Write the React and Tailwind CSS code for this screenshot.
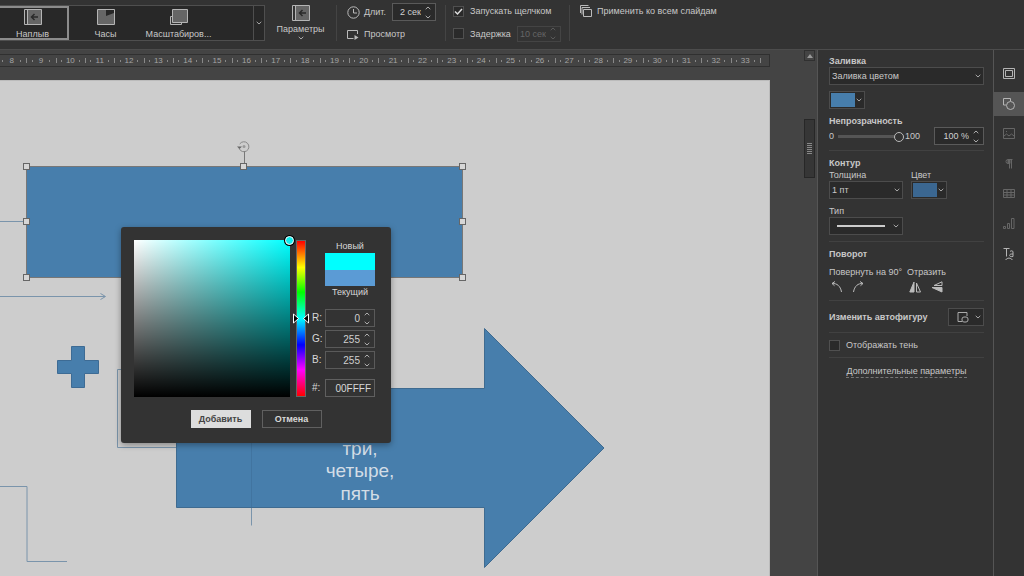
import React, { useState } from 'react';

const RULER_MARKS = Array.from({ length: 26 }, (_, i) => i + 8);

const Chevron = ({ className = '', up = false }) => (
  <svg className={`h-1 w-[6px] shrink-0 opacity-80 ${className}`} viewBox="0 0 6 4" fill="none" stroke="currentColor" aria-hidden="true">
    <path d={up ? 'M0.7 3.2 3 1l2.3 2.2' : 'M0.7 0.8 3 3l2.3-2.2'} />
  </svg>
);

const SlideInIcon = () => (
  <svg className="h-4 w-[18px] shrink-0" viewBox="0 0 18 16" fill="#666" stroke="#b5b5b5" aria-hidden="true">
    <path d="M.5.5h17v15H.5z" />
    <path d="M1 1h2v14H1z" fill="#333" stroke="none" />
    <path d="M3.500.5v15" />
    <path d="M14 8H7.500M10.500 5l-3 3 3 3" fill="none" stroke="#2a2a2a" strokeWidth="1.500" />
  </svg>
);

const ClockWipeIcon = () => (
  <svg className="h-4 w-[18px] shrink-0" viewBox="0 0 18 16" aria-hidden="true">
    <path d="M.5.5h17v15H.5z" fill="#666" stroke="#b5b5b5" />
    <path d="M9 1h8v3L9 7z" fill="#262626" />
  </svg>
);

const ZoomIcon = () => (
  <svg className="h-4 w-[18px] shrink-0" viewBox="0 0 18 16" fill="#666" stroke="#b5b5b5" aria-hidden="true">
    <path d="M.5 7.500h11v8H.5z" fill="#333" />
    <path d="M2.500.5h15v13h-15z" />
  </svg>
);

const Spinner = ({ id, value, label, className = '', disabled = false }) => (
  <div className={`flex items-center border pr-1 ${disabled ? 'border-[#444] text-[#666]' : 'border-[#5a5a5a] text-[#d0d0d0]'} ${className}`}>
    <input
      id={id}
      aria-label={label}
      defaultValue={value}
      disabled={disabled}
      className="h-full w-full min-w-0 bg-transparent pr-1 text-right outline-none"
    />
    <div className="flex flex-col gap-[5px]">
      <button type="button" aria-label="Больше" disabled={disabled} className="block"><Chevron up className="block" /></button>
      <button type="button" aria-label="Меньше" disabled={disabled} className="block"><Chevron className="block" /></button>
    </div>
  </div>
);

const CheckBox = ({ id, label, checked = false }) => (
  <div className="flex items-center gap-[6px]">
    <span className="relative block size-[11px]">
      <input
        id={id}
        type="checkbox"
        defaultChecked={checked}
        className="peer block size-[11px] appearance-none border border-[#505050] bg-[#2a2a2a]"
      />
      <svg className="pointer-events-none absolute inset-0 hidden size-[11px] peer-checked:block" viewBox="0 0 11 11" fill="none" stroke="#ddd" strokeWidth="1.500">
        <path d="m2 5.500 2.500 2.500L9 3" />
      </svg>
    </span>
    <label htmlFor={id}>{label}</label>
  </div>
);

const GalleryItem = ({ icon, label, active = false }) => (
  <button
    type="button"
    aria-pressed={active}
    className={`flex w-[73px] flex-col items-center gap-1 leading-[10px] ${active ? 'border-2 border-[#8c8c8c] pt-px' : 'pt-[3px]'}`}
  >
    {icon}
    <span>{label}</span>
  </button>
);

const Toolbar = () => (
  <header className="flex h-[50px] shrink-0 items-start border-b border-[#4c4c4c] bg-[#333] pt-[5px]">
    <div className="-ml-[5px] flex h-9 w-[270px] border border-[#4f4f4f] bg-[#282828]">
      <GalleryItem icon={<SlideInIcon />} label="Наплыв" active />
      <GalleryItem icon={<ClockWipeIcon />} label="Часы" />
      <GalleryItem icon={<ZoomIcon />} label="Масштабиров..." />
      <button type="button" aria-label="Все эффекты" className="ml-auto flex w-[11px] items-center justify-center border-l border-[#4f4f4f]">
        <Chevron />
      </button>
    </div>

    <button type="button" className="flex w-[71px] flex-col items-center">
      <SlideInIcon />
      <span className="mt-[2px]">Параметры</span>
      <Chevron className="mt-px" />
    </button>

    <div className="flex h-9 w-[109px] flex-col justify-between border-l border-[#444] pl-[10px]">
      <div className="-mt-[2px] flex items-center">
        <svg className="mr-1 size-[13px]" viewBox="0 0 13 13" fill="none" stroke="#bbb" aria-hidden="true">
          <circle cx="6.500" cy="6.500" r="5.700" />
          <path d="M6.500 3v4H10" />
        </svg>
        <label htmlFor="duration">Длит.</label>
        <Spinner id="duration" value="2 сек" className="ml-[6px] h-[18px] w-11 bg-[#2a2a2a]" />
      </div>
      <button type="button" className="flex items-center gap-[5px] pb-px">
        <svg className="h-[11px] w-3" viewBox="0 0 12 11" fill="none" stroke="#bbb" aria-hidden="true">
          <path d="M10.500 5V1.500H.5v8h6" />
          <path d="m7.500 6 4 2.500-4 2.500z" fill="#bbb" stroke="none" />
        </svg>
        Просмотр
      </button>
    </div>

    <div className="flex h-9 w-[124px] flex-col justify-between border-l border-[#444] pl-[7px]">
      <CheckBox id="on-click" label="Запускать щелчком" checked />
      <div className="flex h-[15px] items-center">
        <CheckBox id="delay" label="Задержка" />
        <Spinner label="Задержка, сек" value="10 сек" disabled className="ml-[6px] h-4 w-11" />
      </div>
    </div>

    <div className="h-9 border-l border-[#444] pl-[10px]">
      <button type="button" className="flex items-center gap-[5px]">
        <svg className="h-3 w-3" viewBox="0 0 12 12" fill="#333" stroke="#bbb" aria-hidden="true">
          <path d="M.5 8V.5h8" fill="none" />
          <path d="M2 9.500V2.500h8" fill="none" />
          <path d="M3.500 4.500h8v7h-8z" />
        </svg>
        Применить ко всем слайдам
      </button>
    </div>
  </header>
);

const Ruler = () => (
  <div className="h-[13px] overflow-hidden border border-l-0 border-[#303030] bg-[#444] pr-2">
    <div className="-ml-[3px] flex h-full text-[8px] leading-[11px] text-[#a5a5a5]">
      {RULER_MARKS.map((mark) => (
        <div key={mark} className="flex min-w-0 flex-1 items-center justify-between">
          <i className="h-[5px] w-px bg-[#888]" />
          <i className="h-[2px] w-px bg-[#888]" />
          <span className="flex w-2 justify-center">{mark}</span>
          <i className="h-[2px] w-px bg-[#888]" />
          <i className="w-px" />
        </div>
      ))}
      <i className="my-auto h-[5px] w-px bg-[#888]" />
    </div>
  </div>
);

const HANDLES = [[27, 86], [244, 86], [463, 86], [27, 141], [463, 141], [27, 197], [463, 197]];

const Slide = () => (
  <div className="mt-[13px] flex-1 overflow-hidden border-t border-r border-[#bbb] bg-[#cdcdcd]">
    <svg className="block h-[495px] w-[770px]" viewBox="0 0 770 495" fill="none">
      <g stroke="#7a94ab">
        <path d="M0 140.500h27M0 215.500h105M100.500 212.500l5 3-5 3" />
        <path d="M0 405.500h27v75h40" />
        <path d="M200 288.500h-82.500v78h134v78" />
      </g>
      <path d="M71.500 265.500h13v14h14v13h-14v14h-13v-14h-14v-13h14z" fill="#477eac" stroke="#3d6b94" />
      <path d="M26.500 85.500h436v111h-436z" fill="#477eac" stroke="#777" />
      <path d="M176.500 307.500h308v-60L604 367 484.500 486.500v-60h-308z" fill="#477eac" stroke="#3f6b90" />
      <path d="M251.500 350v76" stroke="#4174a0" />
      <path d="M244.500 70v14" stroke="#777" />
      <path d="M239.200 67.500a5 5 0 1 0 .5-4.500" stroke="#888" />
      <circle cx="244" cy="65.500" r="1.500" fill="#999" />
      <path d="M237 65.500h5l-2.500 2.500z" fill="#666" />
      {HANDLES.map(([x, y]) => (
        <rect key={`${x}-${y}`} x={x - 3.5} y={y - 3.5} width="6" height="6" fill="#d6d6d6" stroke="#666" />
      ))}
      <g fill="#d3dde6" fontSize="19" textAnchor="middle">
        <text x="360" y="374">три,</text>
        <text x="360" y="396">четыре,</text>
        <text x="360" y="419">пять</text>
      </g>
    </svg>
  </div>
);

const ColorField = ({ id, label, value }) => (
  <div className="flex items-center justify-between">
    <label htmlFor={id}>{label}</label>
    <Spinner id={id} value={value} className="h-[18px] w-[50px]" />
  </div>
);

const ColorDialog = () => (
  <div
    role="dialog"
    aria-label="Цвет"
    className="absolute top-[177px] left-[121px] w-[270px] rounded-[3px] bg-[#333] px-[13px] pt-[13px] pb-[15px] text-[10px] leading-3 text-[#d8d8d8] shadow-[0_2px_6px_rgba(0,0,0,0.35)]"
  >
    <div className="flex">
      <div className="relative h-[157px] w-[156px] bg-[linear-gradient(to_top,#000,transparent),linear-gradient(to_right,#fff,#0ff)]">
        <span className="absolute -top-1 -right-1 size-[9px] rounded-full border border-white bg-[#10eeee] ring-1 ring-black" />
      </div>
      <div className="relative ml-[6px] h-[157px] w-[10px] border border-[#666] bg-[linear-gradient(to_bottom,#f00,#ff0_17%,#0f0_33%,#0ff_50%,#00f_67%,#f0f_83%,#f00)]">
        <svg className="absolute top-[72px] -left-1 h-[11px] w-4" viewBox="0 0 16 11" fill="#000" stroke="#fff" aria-hidden="true">
          <path d="M.5 1v9l5-4.500zM15.500 1v9l-5-4.500z" />
        </svg>
      </div>
      <div className="ml-[6px] flex w-[63px] flex-col">
        <div className="ml-auto w-[50px]">
          <div className="flex justify-center text-[9px]">Новый</div>
          <div className="mt-px h-[17px] bg-[#0ff]" />
          <div className="h-4 bg-[#5b9bd5]" />
          <div className="flex justify-center text-[9px]">Текущий</div>
        </div>
        <div className="mt-[11px] flex flex-col gap-[3px]">
          <ColorField id="red" label="R:" value="0" />
          <ColorField id="green" label="G:" value="255" />
          <ColorField id="blue" label="B:" value="255" />
        </div>
        <div className="mt-auto flex items-center justify-between">
          <label htmlFor="hex">#:</label>
          <input id="hex" defaultValue="00FFFF" className="h-[18px] w-[50px] border border-[#606060] bg-transparent pr-[3px] text-right outline-none" />
        </div>
      </div>
    </div>
    <div className="mt-[13px] flex justify-center gap-[11px] text-[9px] font-bold">
      <button type="button" className="h-[18px] w-[60px] bg-[#ddd] text-[#444]">Добавить</button>
      <button type="button" className="h-[18px] w-[60px] border border-[#606060]">Отмена</button>
    </div>
  </div>
);

const Editor = () => (
  <main className="relative flex min-w-0 flex-1 overflow-hidden bg-[#444]">
    <div className="flex min-w-0 flex-1 flex-col pt-1">
      <Ruler />
      <Slide />
    </div>
    <div className="ml-[34px] flex w-[13px] flex-col">
      <button type="button" aria-label="Вверх" className="flex h-[11px] w-[11px] items-center justify-center border border-[#303030]">
        <svg className="h-1 w-[6px]" viewBox="0 0 6 4" fill="#999"><path d="M0 4 3 0l3 4z" /></svg>
      </button>
      <div className="mt-[58px] flex h-[59px] w-[11px] flex-col items-center justify-center gap-px border border-[#272727] bg-[#363636]">
        {[0, 1, 2, 3, 4, 5].map((n) => <i key={n} className="h-px w-[5px] bg-[#888]" />)}
      </div>
    </div>
    <ColorDialog />
  </main>
);

const Select = ({ id, value, label, className = '' }) => (
  <div className={`relative ${className}`}>
    <select id={id} aria-label={label} className="block h-[18px] w-full appearance-none border border-[#4c4c4c] bg-[#2a2a2a] pl-[2px] outline-none">
      <option>{value}</option>
    </select>
    <Chevron className="pointer-events-none absolute top-[7px] right-[3px]" />
  </div>
);

const Swatch = ({ label, color }) => (
  <button type="button" aria-label={label} className="flex h-[18px] w-9 items-center border border-[#4c4c4c] bg-[#2a2a2a] pr-[2px] pl-px">
    <span className={`mr-px h-[14px] w-[25px] ${color}`} />
    <Chevron />
  </button>
);

const Separator = ({ className }) => <hr className={`border-[#414141] ${className}`} />;

const ShapeSettings = () => {
  const [opacity, setOpacity] = useState(100);

  return (
    <aside className="w-[176px] shrink-0 border-l border-[#555] bg-[#333] pt-[5px] pr-[9px] pl-[11px] leading-3">
      <h2 className="font-bold"><label htmlFor="fill">Заливка</label></h2>
      <Select id="fill" value="Заливка цветом" />
      <div className="mt-[6px]"><Swatch label="Цвет заливки" color="bg-[#477eac]" /></div>

      <h2 className="mt-[6px] font-bold"><label htmlFor="opacity">Непрозрачность</label></h2>
      <div className="flex items-center">
        <span>0</span>
        <input
          id="opacity"
          type="range"
          value={opacity}
          onChange={(e) => setOpacity(Number(e.target.value))}
          className="mr-px ml-1 h-3 w-[66px] appearance-none bg-transparent [&::-webkit-slider-runnable-track]:h-[3px] [&::-webkit-slider-runnable-track]:bg-[#555] [&::-webkit-slider-thumb]:-mt-[3px] [&::-webkit-slider-thumb]:size-[10px] [&::-webkit-slider-thumb]:appearance-none [&::-webkit-slider-thumb]:rounded-full [&::-webkit-slider-thumb]:border [&::-webkit-slider-thumb]:border-[#bbb] [&::-webkit-slider-thumb]:bg-[#333]"
        />
        <span>100</span>
        <Spinner label="Непрозрачность, %" value={`${opacity} %`} className="ml-auto h-[18px] w-[50px] bg-[#2a2a2a]" />
      </div>

      <Separator className="mt-[5px]" />
      <h2 className="mt-[6px] font-bold">Контур</h2>
      <div className="flex gap-2">
        <div className="w-[74px]">
          <label htmlFor="stroke" className="block">Толщина</label>
          <Select id="stroke" value="1 пт" />
        </div>
        <div>
          <div>Цвет</div>
          <Swatch label="Цвет контура" color="bg-[#3b6791]" />
        </div>
      </div>
      <div className="mt-[6px]">Тип</div>
      <button type="button" aria-label="Тип линии" className="flex h-[18px] w-[74px] items-center justify-between border border-[#4c4c4c] bg-[#2a2a2a] pr-[3px] pl-[7px]">
        <span className="h-[2px] w-12 bg-[#ccc]" />
        <Chevron />
      </button>

      <Separator className="mt-[6px]" />
      <h2 className="mt-[6px] font-bold">Поворот</h2>
      <div className="mt-[6px] flex gap-[5px]">
        <div>
          <div>Повернуть на 90°</div>
          <div className="mt-[3px] flex gap-[9px] pl-[2px]">
            <button type="button" aria-label="Влево на 90°">
              <svg className="size-3" viewBox="0 0 12 12" fill="none" stroke="#bbb"><path d="M4 .5 1 2.500l2.500 2.200M1 2.500c5-.3 8.500 2.500 9.500 8.500" /></svg>
            </button>
            <button type="button" aria-label="Вправо на 90°">
              <svg className="size-3" viewBox="0 0 12 12" fill="none" stroke="#bbb"><path d="m8 .5 3 2-2.500 2.200M11 2.500C6 2.200 2.500 5 1.500 11" /></svg>
            </button>
          </div>
        </div>
        <div>
          <div>Отразить</div>
          <div className="mt-[3px] flex gap-[10px] pl-[2px]">
            <button type="button" aria-label="Отразить слева направо">
              <svg className="size-3" viewBox="0 0 12 12" stroke="#bbb"><path d="M5 1v10H.8z" fill="#bbb" /><path d="M7.500 2v9h4z" fill="none" /></svg>
            </button>
            <button type="button" aria-label="Отразить сверху вниз">
              <svg className="size-3" viewBox="0 0 12 12" stroke="#bbb"><path d="M11 6.500V11L1 6.500z" fill="#bbb" /><path d="M11 .8v3.700H3z" fill="none" /></svg>
            </button>
          </div>
        </div>
      </div>

      <Separator className="mt-[7px]" />
      <div className="mt-[7px] flex items-center justify-between">
        <h2 className="font-bold">Изменить автофигуру</h2>
        <button type="button" aria-label="Изменить автофигуру" className="flex h-[18px] w-9 items-center justify-between border border-[#4c4c4c] bg-[#2a2a2a] pr-[2px] pl-2">
          <svg className="h-[11px] w-3" viewBox="0 0 12 11" fill="none" stroke="#aaa"><path d="M10 4V.5H1v9h4" /><rect x="5" y="5" width="6" height="5" rx="2" /></svg>
          <Chevron />
        </button>
      </div>

      <Separator className="mt-[6px]" />
      <div className="mt-[6px]"><CheckBox id="shadow" label="Отображать тень" /></div>
      <Separator className="mt-[6px]" />
      <div className="mt-[7px] flex justify-center">
        <a href="#advanced" className="border-b border-dashed border-[#777]">Дополнительные параметры</a>
      </div>
    </aside>
  );
};

const RAIL = [
  { name: 'Параметры слайда', icon: <><path d="M.5.5h11v10H.5z" /><path d="M2.500 2.500h7v6h-7z" /></>, on: true },
  { name: 'Параметры фигуры', icon: <><path d="M3 7H.5V.5h7V3" /><circle cx="7.500" cy="7.500" r="4" /></>, on: true, active: true },
  { name: 'Параметры изображения', icon: <><path d="M.5.5h11v10H.5z" /><path d="m1 8 2.500-2L6 8l2.500-2L11 8M3 3.500h1" /></> },
  { name: 'Параметры абзаца', icon: <><path d="M9.500 1.500H5a2 2 0 0 0 0 4h1M6.500 1.500v9M8.500 1.500v9" /><path d="M5 2h2v3.500H5z" fill="currentColor" /></> },
  { name: 'Параметры таблицы', icon: <path d="M.5 1.500h11v8H.5zM.5 4.500h11M.5 7h11M4 1.500v8M8 1.500v8" /> },
  { name: 'Параметры диаграммы', icon: <path d="M.5 8.500h2v2h-2zM4.500 5.500h2v5h-2zM8.500.5h2.500v10H8.500z" /> },
  { name: 'Параметры текста', icon: <><path d="M.5.5h6M3.500.5v8M7 3.500c1-1 3-1 3 .5v4.500c-3 .5-4-.5-3-2 .5-.5 1.500-.5 3-.5" /><path d="M2.500 12c2-2.500 5-2.500 7 0" /></>, on: true },
];

const SideRail = () => (
  <nav className="flex w-[31px] shrink-0 flex-col gap-[6px] border-l border-[#555] bg-[#333] pt-3">
    {RAIL.map((item) => (
      <button
        key={item.name}
        type="button"
        aria-label={item.name}
        className={`flex h-6 items-center justify-center ${item.active ? 'bg-[#555]' : ''} ${item.on ? 'text-[#b5b5b5]' : 'text-[#666]'}`}
      >
        <svg className="size-3" viewBox="0 0 12 12" fill="none" stroke="currentColor">{item.icon}</svg>
      </button>
    ))}
  </nav>
);

export default function App() {
  return (
    <div className="flex h-screen flex-col overflow-hidden bg-[#333] font-['Liberation_Sans',Arial,sans-serif] text-[9px] leading-3 text-[#c8c8c8]">
      <Toolbar />
      <div className="flex min-h-0 flex-1">
        <Editor />
        <ShapeSettings />
        <SideRail />
      </div>
    </div>
  );
}
